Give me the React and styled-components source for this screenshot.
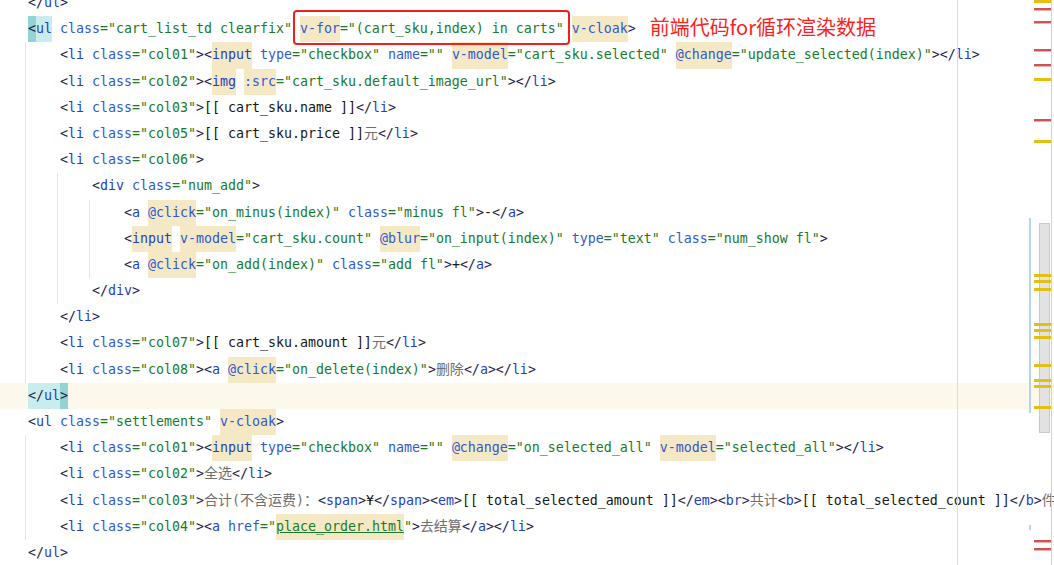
import React from 'react';
import styled, { createGlobalStyle } from 'styled-components';

const GlobalStyle = createGlobalStyle`
  html, body {
    margin: 0;
    padding: 0;
    background: #ffffff;
  }
  body {
    width: 1054px;
    height: 565px;
    overflow: hidden;
  }
`;

const COLORS = {
  p: '#1a1a4a', // brackets
  t: '#2340c2', // tag names
  a: '#2f58d2', // attribute names
  v: '#177a2b', // attribute values
  x: '#161616', // text
  c: '#6f6f6f', // cjk text
  g: '#6f6f6f', // ascii next to cjk
};

const MARKS = {
  b: '#f5e9c5',
  u: '#f5e9c5',
  m: '#c9eded',
  M: '#92d3d3',
};

const Screen = styled.div`
  position: relative;
  display: flex;
  width: 1054px;
  height: 565px;
  overflow: hidden;
  background: #ffffff;
`;

const Editor = styled.div`
  display: flex;
  flex-direction: column;
  flex: 0 0 1030px;
  margin-top: -10px;
  font-family: "DejaVu Sans Mono", "Liberation Mono", monospace;
  font-size: 13.29px;
`;

const Line = styled.div`
  flex: 0 0 26.2px;
  height: 26.2px;
  line-height: 26.2px;
  white-space: pre;
  padding-left: 28px;
  background: ${p => (p.$current ? '#fcf9ec' : 'transparent')};
`;

const Block = styled.div`
  display: flex;
  flex-direction: column;
  margin-left: 25px;
  border-left: 1px solid #e4e4e4;

  & & {
    margin-left: 31px;
  }

  & > ${Line} {
    padding-left: 34px;
  }
`;

const Tok = styled.span`
  color: ${p => COLORS[p.$t]};
  ${p => p.$hl && `display: inline-block; background: ${MARKS[p.$hl]};`}
  ${p => p.$hl === 'u' && 'text-decoration: underline;'}
  ${p =>
    p.$t === 'c' &&
    'font-family: "Noto Sans CJK SC", sans-serif; font-size: 14px; line-height: 1;'}
`;

const Note = styled.span`
  display: inline-block;
  vertical-align: top;
  margin-left: 14px;
  font-family: "Noto Sans CJK SC", "Noto Sans", sans-serif;
  font-size: 20px;
  line-height: 22px;
  color: #fb1f1f;
`;

const Callout = styled.div`
  position: absolute;
  left: 293px;
  top: 10px;
  width: 277px;
  height: 35px;
  box-sizing: border-box;
  border: 2.5px solid #f01e1e;
  border-radius: 4px;
`;

const MarginGuide = styled.div`
  position: absolute;
  left: 957px;
  top: 0;
  bottom: 0;
  width: 1px;
  background: #dcdcdc;
`;

const Stripe = styled.div`
  position: absolute;
  left: 1028px;
  top: 0;
  bottom: 0;
  width: 23px;
  border-right: 1px solid #d2d2d2;
`;

const Thumb = styled.div`
  position: absolute;
  left: 11px;
  top: 223px;
  width: 11px;
  height: 210px;
  box-sizing: border-box;
  background: #e2e2e2;
  border: 1px solid #c9c9c9;
`;

const Fold = styled.div`
  position: absolute;
  left: 1px;
  width: 2px;
  background: #b7d3f3;
`;

const Mark = styled.div`
  position: absolute;
  left: 6px;
  width: 17px;
  height: 3px;
  background: ${p =>
    p.$kind === 'err'
      ? 'linear-gradient(#d05252 0 2px, #eab0b0 2px)'
      : '#e2bf12'};
`;

const CJK = /[\u3000-\u303f\u4e00-\u9fff\uff00-\uffef]/;
const OPEN = { '«': 'b', '⁅': 'u', '⟨': 'm', '⟪': 'M' };
const CLOSE = '»⁆⟩⟫';

// strip marks, then colour each char like the html highlighter does
const tokenize = src => {
  const chars = [];
  let hl = null;
  for (const ch of src) {
    if (OPEN[ch]) hl = OPEN[ch];
    else if (CLOSE.includes(ch)) hl = null;
    else chars.push({ ch, hl });
  }

  let inTag = false;
  let name = false;
  let quote = false;
  chars.forEach((c, i) => {
    const { ch } = c;
    if (quote) {
      c.t = 'v';
      if (ch === '"') quote = false;
      return;
    }
    if (!inTag) {
      if (ch === '<') {
        inTag = true;
        name = true;
        c.t = 'p';
        return;
      }
      c.t = CJK.test(ch) ? 'c' : 'x';
      return;
    }
    if (ch === '/' && name && chars[i - 1].ch === '<') {
      c.t = 'p';
      return;
    }
    if (ch === '>') {
      inTag = false;
      c.t = 'p';
      return;
    }
    if (name && /[\w-]/.test(ch)) {
      c.t = 't';
      return;
    }
    name = false;
    if (ch === '"') {
      quote = true;
      c.t = 'v';
      return;
    }
    if (ch === '=') c.t = 'v';
    else c.t = ch === ' ' ? 'x' : 'a';
  });

  chars.forEach((c, i) => {
    if (c.t === 'x' && '()'.includes(c.ch)) {
      const near = [chars[i - 1], chars[i + 1]].some(n => n && n.t === 'c');
      if (near) c.t = 'g';
    }
  });

  const out = [];
  chars.forEach(c => {
    const last = out[out.length - 1];
    if (last && last.t === c.t && last.hl === c.hl) last.text += c.ch;
    else out.push({ t: c.t, hl: c.hl, text: c.ch });
  });
  return out;
};

const Code = ({ src, current, children }) => (
  <Line $current={current}>
    {tokenize(src).map((k, i) => (
      <Tok key={i} $t={k.t} $hl={k.hl}>
        {k.text}
      </Tok>
    ))}
    {children}
  </Line>
);

const errMarks = [8, 21, 49, 64, 119, 540, 548];
const warnMarks = [0, 78, 140, 274, 280, 288, 323, 329, 336, 364, 379, 385, 406];

export default function App() {
  return (
    <Screen>
      <GlobalStyle />
      <Editor>
        <Code src="</ul>" />
        <Code src={'⟪<⟫⟨ul⟩ class="cart_list_td clearfix" «v-for»="(cart_sku,index) in carts" «v-cloak»>'}>
          <Note>前端代码for循环渲染数据</Note>
        </Code>
        <Block>
          <Code src={'<li class="col01"><«input» type="checkbox" name="" «v-model»="cart_sku.selected" «@change»="update_selected(index)"></li>'} />
          <Code src={'<li class="col02"><«img» «:src»="cart_sku.default_image_url"></li>'} />
          <Code src={'<li class="col03">[[ cart_sku.name ]]</li>'} />
          <Code src={'<li class="col05">[[ cart_sku.price ]]元</li>'} />
          <Code src={'<li class="col06">'} />
          <Block>
            <Code src={'<div class="num_add">'} />
            <Block>
              <Code src={'<a «@click»="on_minus(index)" class="minus fl">-</a>'} />
              <Code src={'<«input» «v-model»="cart_sku.count" «@blur»="on_input(index)" type="text" class="num_show fl">'} />
              <Code src={'<a «@click»="on_add(index)" class="add fl">+</a>'} />
            </Block>
            <Code src="</div>" />
          </Block>
          <Code src="</li>" />
          <Code src={'<li class="col07">[[ cart_sku.amount ]]元</li>'} />
          <Code src={'<li class="col08"><a «@click»="on_delete(index)">删除</a></li>'} />
        </Block>
        <Code src="⟨</ul⟩⟪>⟫" current />
        <Code src={'<ul class="settlements" «v-cloak»>'} />
        <Block>
          <Code src={'<li class="col01"><«input» type="checkbox" name="" «@change»="on_selected_all" «v-model»="selected_all"></li>'} />
          <Code src={'<li class="col02">全选</li>'} />
          <Code src={'<li class="col03">合计(不含运费)：<span>¥</span><em>[[ total_selected_amount ]]</em><br>共计<b>[[ total_selected_count ]]</b>件</li>'} />
          <Code src={'<li class="col04"><a href="⁅place_order.html⁆">去结算</a></li>'} />
        </Block>
        <Code src="</ul>" />
      </Editor>

      <Callout />
      <MarginGuide />

      <Stripe>
        <Fold style={{ top: 218, height: 195 }} />
        <Fold style={{ top: 525, height: 5 }} />
        <Thumb />
        {errMarks.map(y => (
          <Mark key={'e' + y} $kind="err" style={{ top: y }} />
        ))}
        {warnMarks.map(y => (
          <Mark key={'w' + y} $kind="warn" style={{ top: y }} />
        ))}
      </Stripe>
    </Screen>
  );
}
